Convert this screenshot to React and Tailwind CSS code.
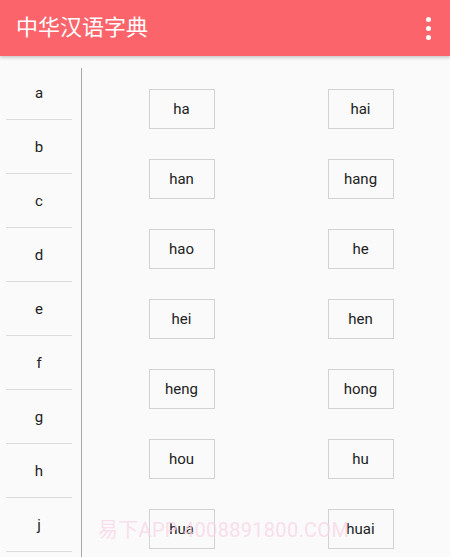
import { useState } from "react";

const letters = ["a", "b", "c", "d", "e", "f", "g", "h", "j"];
const syllables = [
  "ha", "hai", "han", "hang", "hao", "he", "hei", "hen",
  "heng", "hong", "hou", "hu", "hua", "huai",
];

export default function App() {
  const [active, setActive] = useState("h");

  return (
    <div
      className="relative h-[557px] w-[450px] overflow-hidden bg-[#fafafa]"
      style={{ fontFamily: "Roboto, 'Noto Sans CJK SC', sans-serif" }}
    >
      {/* Toolbar */}
      <header className="relative z-10 flex h-14 items-center justify-between bg-[#fb646b] pl-4 pr-[19px] shadow-[0_2px_3px_rgba(0,0,0,0.18)]">
        <h1 className="text-[22px] leading-none text-white">中华汉语字典</h1>
        <div className="flex flex-col gap-[4px]">
          <span className="block h-[5px] w-[5px] rounded-full bg-white" />
          <span className="block h-[5px] w-[5px] rounded-full bg-white" />
          <span className="block h-[5px] w-[5px] rounded-full bg-white" />
        </div>
      </header>

      <div className="flex items-start">
        {/* Letters */}
        <ul className="w-[81px] pl-[6px] pr-[9px] pt-[10px]">
          {letters.map((l) => (
            <li
              key={l}
              onClick={() => setActive(l)}
              className="flex h-[54px] cursor-pointer items-center justify-center border-b border-[#dcdcdc] pt-[2px] text-[15px] text-[#222]"
            >
              {l}
            </li>
          ))}
        </ul>

        <div className="mt-3 h-[500px] w-px bg-[#a9a9a9]" />

        {/* Syllables */}
        <div className="grid flex-1 grid-cols-2 content-start gap-y-[30px] pl-[10px] pt-[33px]">
          {syllables.map((s) => (
            <div key={s} className="flex justify-center">
              <button className="flex h-[40px] w-[66px] items-center justify-center border border-[#d2d2d2] text-[15px] text-[#222]">
                {s}
              </button>
            </div>
          ))}
        </div>
      </div>

      {/* watermark */}
      <div className="pointer-events-none absolute left-[98px] top-[515px] text-[20px] tracking-[0.3px] text-[#f9d3e6] opacity-70">
        易下APP 4008891800.COM
      </div>
    </div>
  );
}
